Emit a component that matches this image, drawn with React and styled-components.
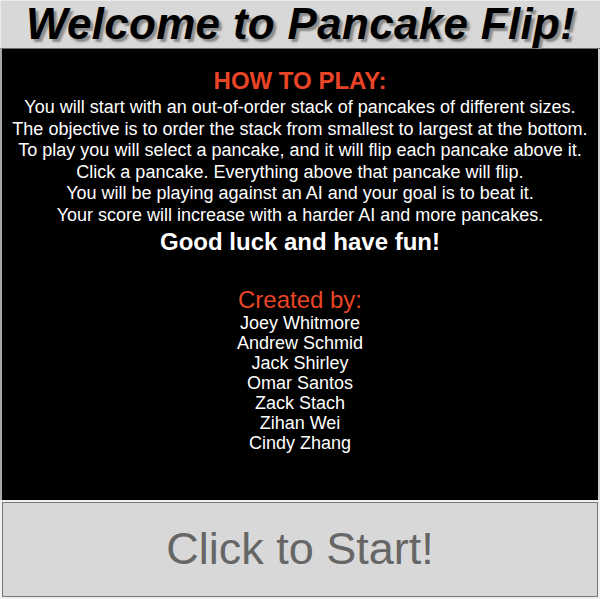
import React from "react";
import styled, { createGlobalStyle } from "styled-components";

const GlobalStyle = createGlobalStyle`
  html, body {
    margin: 0;
    padding: 0;
    background: #ffffff;
  }
  body {
    font-family: "Liberation Sans", Arial, sans-serif;
  }
`;

const Page = styled.div`
  width: 600px;
  height: 599px;
  display: flex;
  flex-direction: column;
  box-sizing: border-box;
`;

const Header = styled.header`
  height: 49px;
  box-sizing: border-box;
  background: #d8d8d8;
  border-top: 1px solid #ececec;
  border-left: 1px solid #ececec;
  border-bottom: 1px solid #6e6e6e;
  display: flex;
  align-items: center;
  justify-content: center;
`;

const Title = styled.h1`
  margin: 0;
  font-size: 44px;
  font-weight: 700;
  font-style: italic;
  color: #000;
  text-shadow: 3px 3px 2px #8a8a8a;
  line-height: 44px;
  padding: 1px 6px 2px;
  letter-spacing: 0.3px;
`;

const Board = styled.main`
  height: 451px;
  box-sizing: border-box;
  background: #000;
  border-left: 2px solid #a8a8a8;
  border-right: 2px solid #d0d0d0;
  display: flex;
  flex-direction: column;
  align-items: center;
  padding-top: 18px;
  text-align: center;
`;

const Heading = styled.h2`
  margin: 0;
  font-size: 24px;
  line-height: 27px;
  font-weight: ${(p) => (p.$bold ? 700 : 400)};
  color: #ea4426;
`;

const Rules = styled.div`
  margin-top: 3px;
  color: #fff;
  font-size: 18px;
  line-height: 21.6px;
`;

const Cheer = styled.div`
  margin-top: 1px;
  color: #fff;
  font-size: 24px;
  line-height: 27px;
  font-weight: 700;
`;

const Credits = styled.section`
  margin-top: 31px;
  display: flex;
  flex-direction: column;
  align-items: center;
`;

const Names = styled.div`
  color: #fff;
  font-size: 18px;
  line-height: 20px;
`;

const StartButton = styled.button`
  flex: 1;
  box-sizing: border-box;
  margin: 0;
  background: #d8d8d8;
  border: 2px solid #f0f0f0;
  box-shadow: inset 0 0 0 1px #777;
  color: #666;
  font-family: "Liberation Sans", Arial, sans-serif;
  font-size: 45px;
  cursor: pointer;
  padding: 0 0 2px;
`;

const rules = [
  "You will start with an out-of-order stack of pancakes of different sizes.",
  "The objective is to order the stack from smallest to largest at the bottom.",
  "To play you will select a pancake, and it will flip each pancake above it.",
  "Click a pancake. Everything above that pancake will flip.",
  "You will be playing against an AI and your goal is to beat it.",
  "Your score will increase with a harder AI and more pancakes.",
];

const creators = [
  "Joey Whitmore",
  "Andrew Schmid",
  "Jack Shirley",
  "Omar Santos",
  "Zack Stach",
  "Zihan Wei",
  "Cindy Zhang",
];

export default function App() {
  return (
    <Page>
      <GlobalStyle />
      <Header>
        <Title>Welcome to Pancake Flip!</Title>
      </Header>
      <Board>
        <Heading $bold>HOW TO PLAY:</Heading>
        <Rules>
          {rules.map((line) => (
            <div key={line}>{line}</div>
          ))}
        </Rules>
        <Cheer>Good luck and have fun!</Cheer>
        <Credits>
          <Heading>Created by:</Heading>
          <Names>
            {creators.map((name) => (
              <div key={name}>{name}</div>
            ))}
          </Names>
        </Credits>
      </Board>
      <StartButton>Click to Start!</StartButton>
    </Page>
  );
}
